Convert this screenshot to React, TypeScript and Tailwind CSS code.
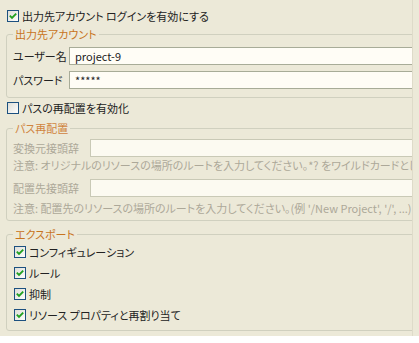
import React from 'react';

const Check = ({ checked }: { checked: boolean }) => (
  <svg width="12" height="12" viewBox="0 0 12 12" className="shrink-0">
    <defs>
      <linearGradient id="cbfill" x1="0" y1="0" x2="1" y2="1">
        <stop offset="0" stopColor="#dcdcd5" />
        <stop offset="1" stopColor="#ffffff" />
      </linearGradient>
    </defs>
    <rect x="0.5" y="0.5" width="11" height="11" fill="url(#cbfill)" stroke="#1c5180" />
    {checked && <path d="M2.8 5.6 L5 7.8 L9.2 3.6" fill="none" stroke="#21a121" strokeWidth="1.9" />}
  </svg>
);

const Field = ({ label, value, width, disabled }: { label: string; value: string; width: string; disabled?: boolean }) => (
  <div className="flex items-center h-[18px]">
    <span className={`${width} shrink-0 whitespace-nowrap ${disabled ? 'text-[#aca899]' : 'text-[#222]'}`}>{label}</span>
    <input
      readOnly
      value={value}
      className={`flex-1 min-w-0 h-[18px] px-[5px] outline-none border ${
        disabled ? 'border-[#c9c9b6] bg-[#fcfaf1]' : 'border-[#a8ac98] bg-[#fffdf6] text-[#222]'
      }`}
    />
  </div>
);

const CheckRow = ({ label, checked }: { label: string; checked: boolean }) => (
  <div className="flex items-center gap-[3px] h-[21px] pl-[1px]">
    <Check checked={checked} />
    <span className="text-[#222]">{label}</span>
  </div>
);

export default function App() {
  return (
    <div className="w-[419px] h-[343px] bg-white text-[11px] leading-[14px] [font-family:'Noto_Sans_CJK_JP',sans-serif] [font-feature-settings:'palt']">
      <div className="flex h-[336px] bg-[#ece9d8]">
        <div className="w-[413px] overflow-hidden border-r border-[#dedbc9]">
          <div className="w-[480px] pt-[8px]">
            <div className="flex items-center gap-[3px] h-4 pl-[7px]">
              <Check checked />
              <span className="text-[#222]">出力先アカウント ログインを有効にする</span>
            </div>

            <fieldset className="ml-[6px] mt-[3px] border border-[#d0d0bf] rounded-[3px] px-[6px] pb-[8px]">
              <legend className="px-[2px] text-[#c8741e]">出力先アカウント</legend>
              <div className="flex flex-col gap-[6px] pt-[6px]">
                <Field label="ユーザー名" value="project-9" width="w-[56px]" />
                <Field label="パスワード" value="*****" width="w-[56px]" />
              </div>
            </fieldset>

            <div className="flex items-center gap-[3px] h-4 pl-[7px] mt-[2px]">
              <Check checked={false} />
              <span className="text-[#222]">パスの再配置を有効化</span>
            </div>

            <fieldset className="ml-[6px] mt-[5px] border border-[#d0d0bf] rounded-[3px] px-[6px] pb-[5px]">
              <legend className="px-[2px] text-[#d08440]">パス再配置</legend>
              <div className="flex flex-col pt-[4px]">
                <Field label="変換元接頭辞" value="" width="w-[77px]" disabled />
                <div className="h-[14px] mt-[1px] whitespace-nowrap text-[#aca899]">
                  注意: オリジナルのリソースの場所のルートを入力してください。*? をワイルドカードとして使用できます。
                </div>
                <div className="mt-[7px]">
                  <Field label="配置先接頭辞" value="" width="w-[77px]" disabled />
                </div>
                <div className="h-[14px] mt-[4px] whitespace-nowrap text-[#aca899]">
                  注意: 配置先のリソースの場所のルートを入力してください。(例 '/New Project', '/', ...)
                </div>
              </div>
            </fieldset>

            <fieldset className="ml-[6px] mt-[6px] border border-[#d0d0bf] rounded-[3px] px-[6px] pb-[5px]">
              <legend className="px-[2px] text-[#c8741e]">エクスポート</legend>
              <div className="flex flex-col">
                <CheckRow label="コンフィギュレーション" checked />
                <CheckRow label="ルール" checked />
                <CheckRow label="抑制" checked />
                <CheckRow label="リソース プロパティと再割り当て" checked />
              </div>
            </fieldset>
          </div>
        </div>
        <div className="flex-1" />
      </div>
    </div>
  );
}
